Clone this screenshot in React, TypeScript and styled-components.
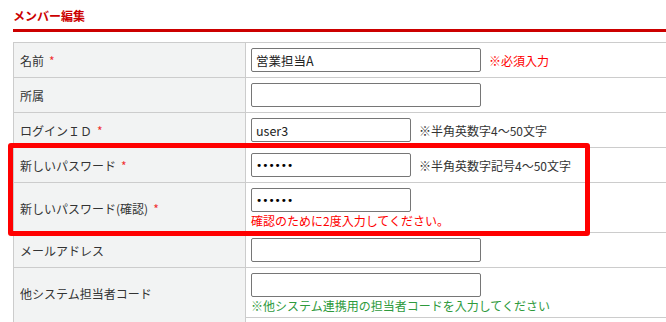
import * as React from "react";
import styled, { createGlobalStyle } from "styled-components";

const GlobalStyle = createGlobalStyle`
  html, body {
    margin: 0;
    padding: 0;
    background: #fff;
    overflow: hidden;
  }
  body {
    font-family: "Noto Sans CJK JP", "Liberation Sans", sans-serif;
    font-size: 12px;
    color: #333;
  }
`;

const Page = styled.div`
  position: relative;
  box-sizing: border-box;
  width: 100%;
  height: 322px;
  overflow: hidden;
  padding-left: 13px;
`;

const Heading = styled.h2`
  margin: 0;
  padding: 8px 0 6px;
  line-height: 15px;
  font-size: 12px;
  font-weight: bold;
  color: #cc0000;
  border-bottom: 3px solid #cc0000;
`;

const Table = styled.div`
  margin-top: 10px;
  border-top: 1px solid #ccc;
  border-left: 1px solid #ccc;
`;

const Row = styled.div<{ $tall?: boolean }>`
  display: grid;
  grid-template-columns: 232px 1fr;
  height: ${(p) => (p.$tall ? 49 : 34)}px;
  border-bottom: 1px solid #ccc;
`;

const Label = styled.div`
  display: flex;
  align-items: center;
  padding-left: 6px;
  background: #f2f3f3;
  border-right: 1px solid #ccc;
  color: #333;
`;

const Star = styled.span`
  color: #f03030;
  margin-left: 5px;
`;

const Field = styled.div`
  padding: 5px;
  display: flex;
  flex-direction: column;
`;

const Line = styled.div`
  display: flex;
  align-items: center;
`;

const Input = styled.input<{ $short?: boolean }>`
  box-sizing: border-box;
  width: ${(p) => (p.$short ? 160 : 230)}px;
  height: 24px;
  margin: 0;
  padding: 0 4px;
  border: 1px solid #767676;
  border-radius: 2px;
  font-family: "Noto Sans CJK JP", "Liberation Sans", sans-serif;
  font-size: 12.5px;
  color: #222;
  background: #fff;
  outline: none;

  &[type="password"] {
    font-family: "DejaVu Sans", sans-serif;
    font-size: 10.5px;
    color: #000;
  }
`;

const Note = styled.span<{ $tone?: "red" | "gray" }>`
  margin-left: 8px;
  color: ${(p) => (p.$tone === "red" ? "#f00" : "#333")};
`;

const Help = styled.div<{ $tone: "red" | "green" }>`
  line-height: 15px;
  margin-top: 1px;
  color: ${(p) => (p.$tone === "red" ? "#f00" : "#2e9a3c")};
`;

const Highlight = styled.div`
  position: absolute;
  left: 8px;
  top: 143px;
  width: 582px;
  height: 93px;
  box-sizing: border-box;
  border: 5px solid #ff0000;
  border-radius: 3px;
  pointer-events: none;
`;

export default function App() {
  return (
    <>
      <GlobalStyle />
      <Page>
        <Heading>メンバー編集</Heading>
        <Table>
          <Row>
            <Label>
              名前<Star>*</Star>
            </Label>
            <Field>
              <Line>
                <Input defaultValue="営業担当A" />
                <Note $tone="red">※必須入力</Note>
              </Line>
            </Field>
          </Row>
          <Row>
            <Label>所属</Label>
            <Field>
              <Line>
                <Input />
              </Line>
            </Field>
          </Row>
          <Row>
            <Label>
              ログインＩＤ<Star>*</Star>
            </Label>
            <Field>
              <Line>
                <Input $short defaultValue="user3" />
                <Note>※半角英数字4〜50文字</Note>
              </Line>
            </Field>
          </Row>
          <Row>
            <Label>
              新しいパスワード<Star>*</Star>
            </Label>
            <Field>
              <Line>
                <Input $short type="password" defaultValue="abcdef" />
                <Note>※半角英数字記号4〜50文字</Note>
              </Line>
            </Field>
          </Row>
          <Row $tall>
            <Label>
              新しいパスワード(確認)<Star>*</Star>
            </Label>
            <Field>
              <Line>
                <Input $short type="password" defaultValue="abcdef" />
              </Line>
              <Help $tone="red">確認のために2度入力してください。</Help>
            </Field>
          </Row>
          <Row>
            <Label>メールアドレス</Label>
            <Field>
              <Line>
                <Input />
              </Line>
            </Field>
          </Row>
          <Row $tall>
            <Label>他システム担当者コード</Label>
            <Field>
              <Line>
                <Input />
              </Line>
              <Help $tone="green">※他システム連携用の担当者コードを入力してください</Help>
            </Field>
          </Row>
          <Row>
            <Label />
            <Field />
          </Row>
        </Table>
        <Highlight />
      </Page>
    </>
  );
}
